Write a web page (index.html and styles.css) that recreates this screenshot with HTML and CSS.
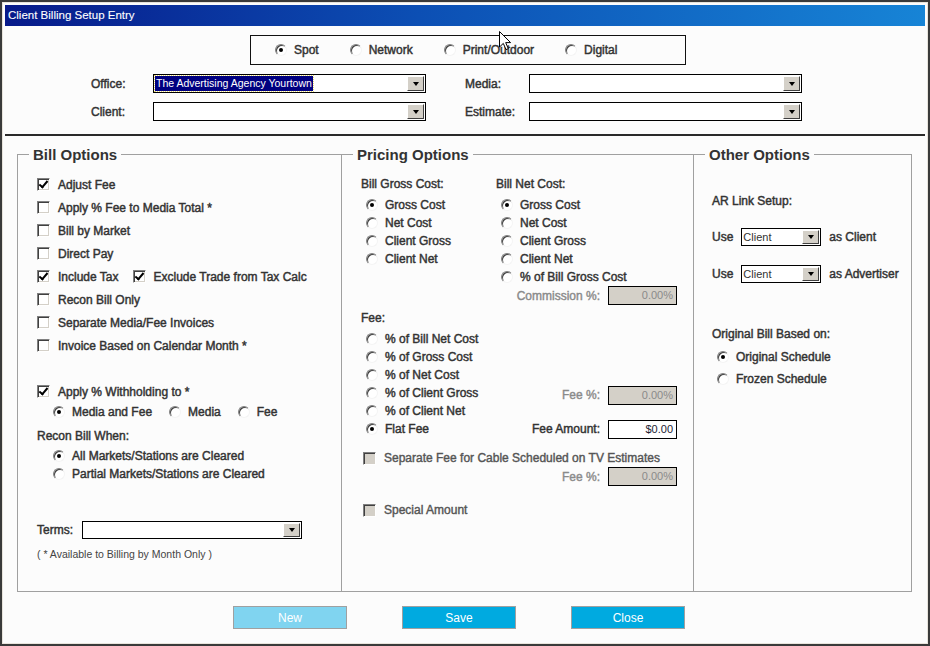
FILE: index.html
```html
<!DOCTYPE html>
<html lang="en">
<head>
  <meta charset="UTF-8" />
  <title>Client Billing Setup Entry</title>
  <link rel="stylesheet" href="styles.css">
</head>
<body>
  <div class="window">
    <!-- Title bar -->
    <div class="titlebar">Client Billing Setup Entry</div>

    <!-- Media type -->
    <div class="type-box">
      <div class="opt"><span class="radio checked"></span>Spot</div>
      <div class="opt"><span class="radio"></span>Network</div>
      <div class="opt"><span class="radio"></span>Print/Outdoor</div>
      <div class="opt"><span class="radio"></span>Digital</div>
    </div>

    <!-- Lookups -->
    <div class="lookups">
      <span class="lbl">Office:</span>
      <div class="combo"><span class="value"><span class="sel-text">The Advertising Agency Yourtown</span></span><span class="arrow"></span></div>
      <span class="lbl">Media:</span>
      <div class="combo"><span class="value"></span><span class="arrow"></span></div>
      <span class="lbl">Client:</span>
      <div class="combo"><span class="value"></span><span class="arrow"></span></div>
      <span class="lbl">Estimate:</span>
      <div class="combo"><span class="value"></span><span class="arrow"></span></div>
    </div>

    <div class="separator"></div>

    <div class="groups">
      <!-- Bill options -->
      <fieldset class="group bill-group">
        <legend>Bill Options</legend>
        <div class="group-body">
          <div class="row"><span class="check checked"></span>Adjust Fee</div>
          <div class="row"><span class="check"></span>Apply % Fee to Media Total *</div>
          <div class="row"><span class="check"></span>Bill by Market</div>
          <div class="row"><span class="check"></span>Direct Pay</div>
          <div class="row"><span class="check checked"></span>Include Tax<span class="check checked tax-check"></span>Exclude Trade from Tax Calc</div>
          <div class="row"><span class="check"></span>Recon Bill Only</div>
          <div class="row"><span class="check"></span>Separate Media/Fee Invoices</div>
          <div class="row"><span class="check"></span>Invoice Based on Calendar Month *</div>
          <div class="row withholding"><span class="check checked"></span>Apply % Withholding to *</div>
          <div class="row short indent">
            <div class="opt"><span class="radio checked"></span>Media and Fee</div>
            <div class="opt"><span class="radio"></span>Media</div>
            <div class="opt"><span class="radio"></span>Fee</div>
          </div>
          <div class="row short recon-head">Recon Bill When:</div>
          <div class="row short indent first-recon"><span class="radio checked"></span>All Markets/Stations are Cleared</div>
          <div class="row short indent"><span class="radio"></span>Partial Markets/Stations are Cleared</div>
          <div class="row terms">
            <span class="terms-lbl">Terms:</span>
            <div class="combo terms-combo"><span class="value"></span><span class="arrow"></span></div>
          </div>
          <div class="note">( * Available to Billing by Month Only )</div>
        </div>
      </fieldset>

      <!-- Pricing options -->
      <fieldset class="group pricing-group">
        <legend>Pricing Options</legend>
        <div class="group-body">
          <div class="cost-cols">
            <div>
              <div class="sub-head">Bill Gross Cost:</div>
              <div class="radio-list">
                <div class="row short"><span class="radio checked"></span>Gross Cost</div>
                <div class="row short"><span class="radio"></span>Net Cost</div>
                <div class="row short"><span class="radio"></span>Client Gross</div>
                <div class="row short"><span class="radio"></span>Client Net</div>
              </div>
            </div>
            <div>
              <div class="sub-head">Bill Net Cost:</div>
              <div class="radio-list">
                <div class="row short"><span class="radio checked"></span>Gross Cost</div>
                <div class="row short"><span class="radio"></span>Net Cost</div>
                <div class="row short"><span class="radio"></span>Client Gross</div>
                <div class="row short"><span class="radio"></span>Client Net</div>
                <div class="row short"><span class="radio"></span>% of Bill Gross Cost</div>
              </div>
            </div>
          </div>
          <div class="field-row">
            <span class="field-lbl disabled">Commission %:</span>
            <span class="num disabled">0.00%</span>
          </div>

          <div class="sub-head fee-head">Fee:</div>
          <div class="radio-list fee-list">
            <div class="row short"><span class="radio"></span>% of Bill Net Cost</div>
            <div class="row short"><span class="radio"></span>% of Gross Cost</div>
            <div class="row short"><span class="radio"></span>% of Net Cost</div>
            <div class="row short">
              <span class="radio"></span>% of Client Gross
              <span class="field-right fee-pct"><span class="field-lbl disabled">Fee %:</span><span class="num disabled">0.00%</span></span>
            </div>
            <div class="row short"><span class="radio"></span>% of Client Net</div>
            <div class="row short">
              <span class="radio checked"></span>Flat Fee
              <span class="field-right"><span class="field-lbl">Fee Amount:</span><span class="num">$0.00</span></span>
            </div>
          </div>

          <div class="row short cable-row disabled-text"><span class="check disabled"></span>Separate Fee for Cable Scheduled on TV Estimates</div>
          <div class="field-row">
            <span class="field-lbl disabled">Fee %:</span>
            <span class="num disabled">0.00%</span>
          </div>
          <div class="row short special-row disabled-text"><span class="check disabled"></span>Special Amount</div>
        </div>
      </fieldset>

      <!-- Other options -->
      <fieldset class="group other-group">
        <legend>Other Options</legend>
        <div class="group-body">
          <div class="row short">AR Link Setup:</div>
          <div class="row short use-row">Use <div class="combo small"><span class="value">Client</span><span class="arrow"></span></div> as Client</div>
          <div class="row short use-row">Use <div class="combo small"><span class="value">Client</span><span class="arrow"></span></div> as Advertiser</div>
          <div class="row short orig-head">Original Bill Based on:</div>
          <div class="row short indent-sm orig-first"><span class="radio checked"></span>Original Schedule</div>
          <div class="row short indent-sm orig-second"><span class="radio"></span>Frozen Schedule</div>
        </div>
      </fieldset>
    </div>

    <!-- Buttons -->
    <div class="buttons">
      <button class="btn btn-new">New</button>
      <button class="btn">Save</button>
      <button class="btn">Close</button>
    </div>

    <!-- mouse pointer -->
    <svg class="pointer" width="13" height="20" viewBox="0 0 13 20">
      <path d="M0.5 0.5 L0.5 16 L4.3 12.4 L7 18.6 L9.3 17.6 L6.7 11.6 L11.6 11.6 Z" fill="#fff" stroke="#000" stroke-width="1"/>
    </svg>
  </div>
</body>
</html>
```

FILE: styles.css
```css
* {
  box-sizing: border-box;
}

body {
  margin: 0;
  font-family: "Liberation Sans", Arial, sans-serif;
  font-size: 12px;
  color: #333;
  background: #fff;
}

.window {
  position: relative;
  width: 930px;
  height: 646px;
  border: 2px solid #3a3a3a;
  padding: 3px;
  background: #fcfcfc;
  box-shadow: inset 0 0 0 1px #e8e4dc;
  -webkit-text-stroke: 0.45px #333;
}

.titlebar {
  height: 21px;
  line-height: 21px;
  padding-left: 3px;
  color: #fff;
  font-size: 11.5px;
  -webkit-text-stroke: 0.1px #fff;
  background: linear-gradient(to right, #071a8a, #0c4fb4 45%, #1784d6);
}

/* media type box */
.type-box {
  display: flex;
  align-items: center;
  gap: 31px;
  width: 436px;
  height: 30px;
  margin: 9px 0 0 245px;
  padding-left: 24px;
  border: 1px solid #111;
}

.opt {
  display: flex;
  align-items: center;
}

/* lookups */
.lookups {
  display: grid;
  grid-template-columns: 62px 312px 64px 273px;
  grid-auto-rows: 19px;
  row-gap: 9px;
  margin: 9px 0 0 86px;
  align-items: center;
}

.lbl {
  font-size: 12px;
}

.combo {
  display: flex;
  width: 273px;
  height: 19px;
  border: 1px solid #000;
  background: #fff;
  -webkit-text-stroke: 0;
}

.combo .value {
  flex: 1;
  padding: 1px;
  font-size: 10.5px;
  line-height: 15px;
  color: #333;
  overflow: hidden;
  white-space: nowrap;
}

.sel-text {
  display: inline-block;
  background: #000080;
  color: #fff;
  padding: 0 1px;
  outline: 1px dotted #e8d870;
}

.combo .arrow {
  width: 17px;
  margin: 1px;
  background: #d4d0c8;
  border: 1px solid;
  border-color: #fff #404040 #404040 #fff;
  display: flex;
  align-items: center;
  justify-content: center;
}

.combo .arrow::before {
  content: "";
  border-left: 3.5px solid transparent;
  border-right: 3.5px solid transparent;
  border-top: 4px solid #000;
}

.separator {
  margin-top: 13px;
  border-top: 2px solid #2a2a2a;
}

/* group boxes */
.groups {
  display: flex;
  margin: 10px 0 0 12px;
}

.group {
  margin: 0;
  padding: 0;
  min-width: 0;
  height: 446px;
  border: 1px solid #a0a0a0;
}

.group legend {
  margin-left: 11px;
  padding: 0 4px;
  font-size: 15px;
  font-weight: bold;
  line-height: 17px;
  color: #333;
  -webkit-text-stroke: 0;
}

.bill-group {
  width: 325px;
}

.pricing-group {
  width: 352px;
  border-left: none;
}

.other-group {
  width: 218px;
  border-left: none;
}

.row {
  display: flex;
  align-items: center;
  height: 23px;
  white-space: nowrap;
}

.row.short {
  height: 18px;
}

/* checkboxes and radios */
.check {
  position: relative;
  flex: none;
  width: 13px;
  height: 13px;
  margin-right: 8px;
  background: #fff;
  border: 1px solid;
  border-color: #808080 #fff #fff #808080;
  box-shadow: inset 1px 1px 0 #404040, inset -1px -1px 0 #d4d0c8;
  -webkit-text-stroke: 0;
}

.check.checked::after {
  content: "";
  position: absolute;
  left: 3px;
  top: 0px;
  width: 3px;
  height: 7px;
  border: solid #000;
  border-width: 0 2px 2px 0;
  transform: rotate(40deg);
}

.check.disabled {
  background: #d4d0c8;
}

.radio {
  flex: none;
  display: flex;
  align-items: center;
  justify-content: center;
  width: 12px;
  height: 12px;
  margin-right: 7px;
  border-radius: 50%;
  background: #fff;
  border: 1px solid;
  border-color: #808080 #f4f4f4 #f4f4f4 #808080;
  box-shadow: inset 1px 1px 0 #404040;
}

.radio.checked::after {
  content: "";
  width: 4px;
  height: 4px;
  border-radius: 50%;
  background: #000;
}

/* bill options */
.bill-group .group-body {
  padding: 10px 0 0 19px;
}

.tax-check {
  margin-left: 14px;
}

.withholding {
  margin-top: 23px;
}

.bill-group .indent {
  padding-left: 16px;
}

.bill-group .indent .opt {
  margin-right: 17px;
}

.recon-head {
  margin-top: 6px;
}

.first-recon {
  margin-top: 2px;
}

.terms {
  height: 19px;
  margin-top: 37px;
}

.terms-lbl {
  width: 45px;
}

.terms-combo {
  width: 220px;
  height: 18px;
}

.note {
  margin-top: 8px;
  font-size: 10.5px;
  line-height: 14px;
  color: #444;
  -webkit-text-stroke: 0;
}

/* pricing options */
.pricing-group .group-body {
  padding: 12px 16px 0 19px;
}

.cost-cols {
  display: grid;
  grid-template-columns: 135px 1fr;
}

.sub-head {
  height: 18px;
  line-height: 18px;
  margin-bottom: 3px;
}

.radio-list {
  padding-left: 5px;
}

.field-row {
  display: flex;
  align-items: center;
  justify-content: flex-end;
  height: 19px;
  gap: 8px;
}

.field-right {
  display: flex;
  align-items: center;
  gap: 8px;
  margin-left: auto;
}

.fee-pct {
  margin-top: 4px;
}

.field-lbl.disabled {
  color: #8a8a8a;
  -webkit-text-stroke: 0.4px #8a8a8a;
}

.num {
  width: 69px;
  height: 19px;
  border: 1px solid #000;
  background: #fff;
  text-align: right;
  padding-right: 3px;
  font-size: 11px;
  line-height: 17px;
  color: #223;
  -webkit-text-stroke: 0;
}

.num.disabled {
  background: #d4d0c8;
  color: #8a8a8a;
}

.fee-head {
  margin: 4px 0 3px;
}

.cable-row {
  margin-top: 11px;
  padding-left: 2px;
}

.special-row {
  margin-top: 15px;
  padding-left: 2px;
}

.disabled-text {
  color: #555;
  -webkit-text-stroke: 0.4px #555;
}

/* other options */
.other-group .group-body {
  padding: 29px 0 0 18px;
}

.use-row {
  margin-top: 18px;
  gap: 8px;
}

.use-row + .use-row {
  margin-top: 19px;
}

.combo.small {
  width: 80px;
  height: 18px;
}

.combo.small .value {
  font-size: 11px;
  line-height: 14px;
}

.orig-head {
  margin-top: 42px;
}

.indent-sm {
  padding-left: 5px;
}

.orig-first {
  margin-top: 5px;
}

.orig-second {
  margin-top: 4px;
}

/* buttons */
.buttons {
  display: flex;
  gap: 55px;
  margin: 14px 0 0 228px;
}

.btn {
  width: 114px;
  height: 23px;
  border: 1px solid #a0a0a0;
  background: #00aae0;
  color: #fff;
  font-family: "Liberation Sans", Arial, sans-serif;
  font-size: 12px;
  -webkit-text-stroke: 0;
}

.btn-new {
  background: #80d4f0;
}

.pointer {
  position: absolute;
  left: 497px;
  top: 29px;
}
```
